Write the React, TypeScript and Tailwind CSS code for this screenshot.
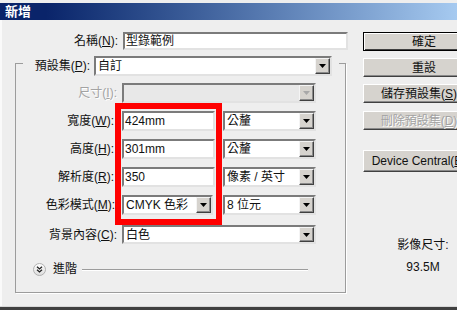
import type { ReactNode } from 'react'

const sunken =
  'border-2 border-t-[#7b7b7b] border-l-[#7b7b7b] border-r-[#e2e2e2] border-b-[#e2e2e2]'

function DropBtn({ disabled }: { disabled?: boolean }) {
  return (
    <div className="h-full w-[15px] shrink-0 flex items-center justify-center bg-[#d6d3ce] border border-t-[#f4f4f4] border-l-[#f4f4f4] border-r-[#404040] border-b-[#404040] shadow-[inset_-1px_-1px_0_#8a8a8a]">
      <svg width="7" height="4" viewBox="0 0 7 4">
        <path d="M0 0h7L3.5 4z" fill={disabled ? '#a8a8a8' : '#000'} />
      </svg>
    </div>
  )
}

function Select({ value, className, disabled }: { value?: string; className: string; disabled?: boolean }) {
  return (
    <div className={`flex items-stretch ${sunken} ${disabled ? 'bg-[#e8e8e8]' : 'bg-white'} ${className}`}>
      <span className="flex-1 flex items-center pl-[2px] text-[#111] whitespace-nowrap overflow-hidden">{value}</span>
      <DropBtn disabled={disabled} />
    </div>
  )
}

function Input({ value, className }: { value: string; className: string }) {
  return (
    <div className={`flex items-center pl-[1px] bg-white text-[#111] ${sunken} ${className}`}>{value}</div>
  )
}

function Btn({ children, primary, disabled, className }: { children: ReactNode; primary?: boolean; disabled?: boolean; className: string }) {
  return (
    <div
      className={`w-[122px] flex items-center justify-center bg-[#d6d3ce] whitespace-nowrap ${
        primary
          ? 'border border-black shadow-[inset_1px_1px_0_#fff,inset_-1px_-1px_0_#404040]'
          : 'border border-t-white border-l-white border-r-[#404040] border-b-[#404040] shadow-[inset_-1px_-1px_0_#8a8a8a]'
      } ${disabled ? 'text-[#a3a3a3] [text-shadow:1px_1px_0_#fff]' : 'text-[#111]'} ${className}`}
    >
      {children}
    </div>
  )
}

function Label({ children, className }: { children: ReactNode; className: string }) {
  return <div className={`flex items-center justify-end whitespace-nowrap text-[#111] ${className}`}>{children}</div>
}

export default function App() {
  return (
    <div className="w-[457px] h-[310px] overflow-hidden bg-[#eeeeee] flex flex-col text-[12px] leading-[14px] font-['Liberation_Sans','Noto_Sans_CJK_TC',sans-serif]">
      {/* title bar */}
      <div className="mt-[3px] h-[17px] shrink-0 flex items-center pl-[5px] bg-linear-to-r from-[#0a246a] from-10% to-[#a6caf0] text-white font-bold text-[13px]">
        新增
      </div>

      <div className="flex-1 flex shadow-[inset_2px_0_0_#fafafa]">
        {/* left column */}
        <div className="w-[363px] shrink-0 flex flex-col">
          <div className="mt-[12px] flex items-center h-[18px]">
            <Label className="w-[123px] pr-[5px] h-full">
              名稱(<u>N</u>):
            </Label>
            <Input value="型錄範例" className="w-[225px] h-[18px]" />
          </div>

          {/* group box */}
          <div className="mt-[13px] ml-[15px] w-[331px] flex flex-col border-l border-r border-b border-[#9c9c9c] shadow-[1px_1px_0_#fff]">
            <div className="-mt-[7px] h-[20px] flex items-stretch">
              <div className="mt-[7px] w-[7px] h-[1px] bg-[#9c9c9c]" />
              <Label className="w-[71px] pr-[4px]">
                預設集(<u>P</u>):
              </Label>
              <Select value="自訂" className="w-[238px] h-[20px]" />
              <div className="ml-auto mt-[7px] w-[6px] h-[1px] bg-[#9c9c9c]" />
            </div>

            <div className="mt-[7px] h-[20px] flex">
              <Label className="w-[106px] pr-[5px] !text-[#a3a3a3] [text-shadow:1px_1px_0_#fff]">
                尺寸(<u>I</u>):
              </Label>
              <Select disabled className="w-[194px] h-[20px]" />
            </div>

            <div className="flex h-[122px]">
              <div className="w-[99px] flex flex-col gap-[8px] pt-[8px]">
                <Label className="h-[20px] pr-[1px]">
                  寬度(<u>W</u>):
                </Label>
                <Label className="h-[20px] pr-[1px]">
                  高度(<u>H</u>):
                </Label>
                <Label className="h-[20px] pr-[1px]">
                  解析度(<u>R</u>):
                </Label>
                <Label className="h-[20px]">
                  色彩模式(<u>M</u>):
                </Label>
              </div>
              <div className="w-[107px] border-[6px] border-[#ff0000] flex flex-col gap-[8px] pt-[2px] px-[1px]">
                <Input value="424mm" className="w-[93px] h-[20px]" />
                <Input value="301mm" className="w-[93px] h-[20px]" />
                <Input value="350" className="w-[93px] h-[20px]" />
                <Select value="CMYK 色彩" className="w-[91px] h-[20px]" />
              </div>
              <div className="ml-[1px] flex flex-col gap-[8px] pt-[8px]">
                <Select value="公釐" className="w-[93px] h-[20px]" />
                <Select value="公釐" className="w-[93px] h-[20px]" />
                <Select value="像素 / 英寸" className="w-[93px] h-[20px]" />
                <Select value="8 位元" className="w-[93px] h-[20px]" />
              </div>
            </div>

            <div className="h-[19px] flex">
              <Label className="w-[106px] pr-[5px]">
                背景內容(<u>C</u>):
              </Label>
              <Select value="白色" className="w-[194px] h-[19px]" />
            </div>

            <div className="mt-[18px] mb-[16px] h-[14px] flex items-center">
              <svg className="ml-[17px]" width="13" height="13" viewBox="0 0 13 13">
                <defs>
                  <linearGradient id="cg" x1="0" y1="0" x2="0" y2="1">
                    <stop offset="0" stopColor="#ffffff" />
                    <stop offset="1" stopColor="#dcdcdc" />
                  </linearGradient>
                </defs>
                <circle cx="6.5" cy="6.5" r="6" fill="url(#cg)" stroke="#b0b0b0" />
                <path d="M4 3.8l2.5 2.2L9 3.8M4 6.8l2.5 2.2L9 6.8" fill="none" stroke="#222" strokeWidth="1.3" />
              </svg>
              <span className="ml-[7px] text-[#111]">進階</span>
              <div className="ml-[5px] w-[226px] h-[1px] bg-[#9c9c9c] shadow-[0_1px_0_#fff]" />
            </div>
          </div>
        </div>

        {/* right column */}
        <div className="w-[122px] shrink-0 flex flex-col">
          <Btn primary className="mt-[12px] h-[19px]">確定</Btn>
          <Btn className="mt-[7px] h-[19px]">重設</Btn>
          <Btn className="mt-[7px] h-[19px]">
            儲存預設集(<u>S</u>)...
          </Btn>
          <Btn disabled className="mt-[8px] h-[19px]">
            刪除預設集(<u>D</u>)...
          </Btn>
          <Btn className="mt-[20px] h-[22px]">
            Device Central(<u>E</u>)...
          </Btn>
          <div className="mt-[66px] w-[120px] text-center text-[#111]">影像尺寸:</div>
          <div className="mt-[8px] w-[120px] text-center text-[#111]">93.5M</div>
        </div>
      </div>

      <div className="h-[1px] shrink-0 bg-[#d8d8d8]" />
      <div className="h-[3px] shrink-0 bg-[#404040]" />
    </div>
  )
}
